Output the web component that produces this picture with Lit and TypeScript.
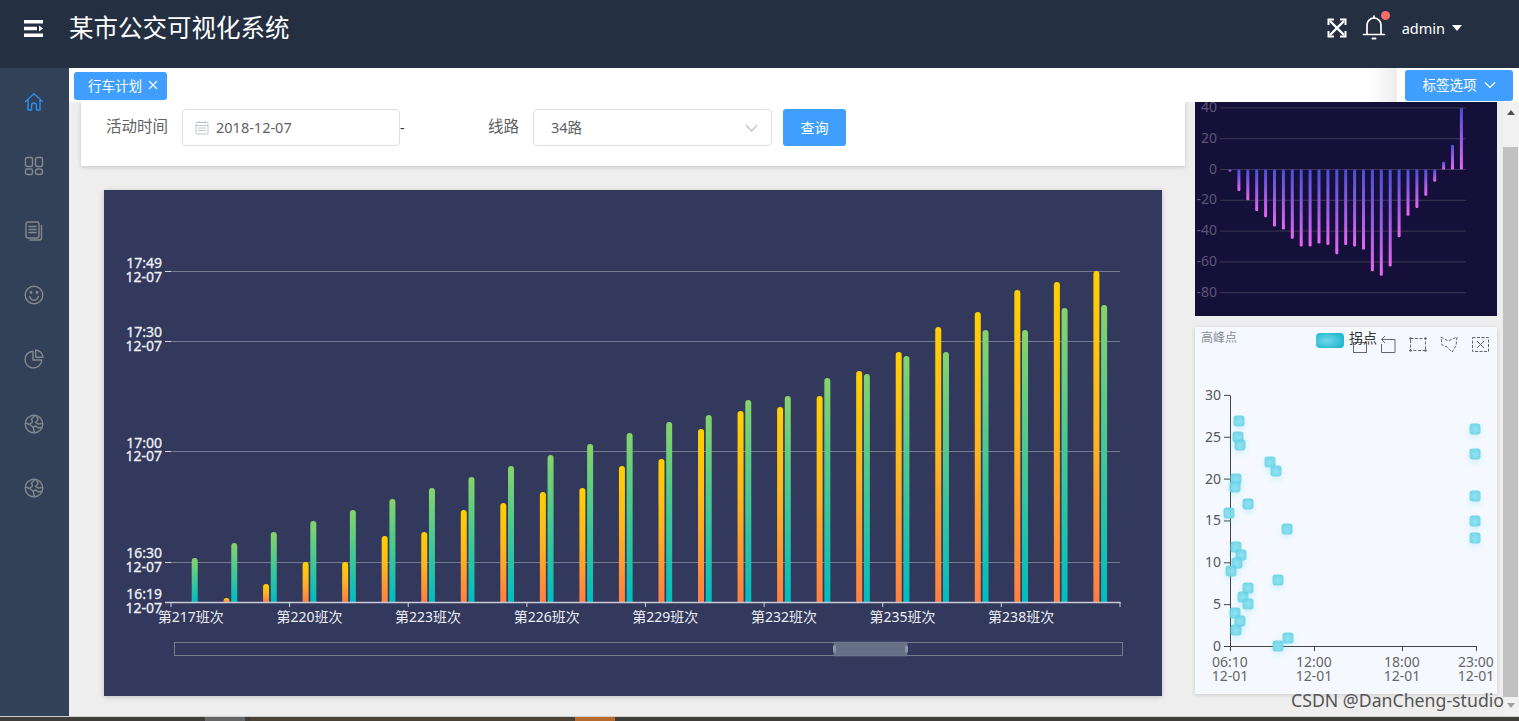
import { LitElement, html, css, svg } from "lit";
import { customElement } from "lit/decorators.js";

const FONT = `"Noto Sans","Noto Sans CJK SC",sans-serif`;

const ORANGE = [0, 598, 584, 562, 562, 536, 532, 510, 503, 492, 488, 466, 459, 429, 411, 407, 396, 371, 352, 327, 312, 290, 282, 271];
const GREEN = [558, 543, 532, 521, 510, 499, 488, 477, 466, 455, 444, 433, 422, 415, 400, 396, 378, 374, 356, 352, 330, 330, 308, 305];
const Y_LABELS: [number, string, number, number][] = [[271, "17:49", -3, 11], [341, "17:30", -4, 10], [451, "17:00", -3, 10], [562, "16:30", -4, 10], [602, "16:19", -3, 11]];
const STEP = 39.54;
const X0 = 171;
const BASE = 602;

const DIFF = [-1, -14, -20, -27, -31, -37, -39, -45, -50, -50, -48, -49, -55, -49, -50, -52, -66, -69, -63, -44, -30, -25, -17, -8, 5, 16, 40];
const POINTS: [number, number][] = [[1239, 421], [1238, 437], [1240, 445], [1270, 462], [1276, 471], [1236, 479], [1235, 487], [1248, 504], [1229, 513], [1287, 529], [1236, 547], [1241, 555], [1237, 563], [1231, 571], [1278, 580], [1248, 588], [1243, 597], [1248, 604], [1235, 613], [1240, 621], [1236, 630], [1288, 638], [1278, 646], [1475, 429], [1475, 454], [1475, 496], [1475, 521], [1475, 538]];

const roundTop = (x: number, top: number, w: number, base: number, r: number) =>
  `M${x - w / 2} ${base}V${top + r}a${r} ${r} 0 0 1 ${w} 0V${base}Z`;

const navIcons = [
  svg`<path d="M1.5 9.5 10 1.8l8.5 7.7M4 8v10h3.6v-4.6a2.4 2.4 0 0 1 4.8 0V18H16V8" stroke="#2f8fee"/>`,
  svg`<rect x="1.5" y="1.5" width="7" height="9" rx="1.5"/><rect x="11.5" y="1.5" width="7" height="9" rx="1.5"/><rect x="1.5" y="13" width="7" height="5.5" rx="1.5"/><rect x="11.5" y="13" width="7" height="5.5" rx="2.5"/>`,
  svg`<rect x="2" y="1" width="13" height="16" rx="2"/><path d="M5 5.5h7M5 8.5h7M5 11.5h7M17.5 4.5V17a2 2 0 0 1-2 2H6"/>`,
  svg`<circle cx="10" cy="10" r="8.8"/><path d="M5.6 11.5c1 2.6 2.6 3.8 4.4 3.8s3.4-1.2 4.4-3.8"/><circle cx="7" cy="7.3" r=".8" fill="#85888d"/><circle cx="13" cy="7.3" r=".8" fill="#85888d"/>`,
  svg`<path d="M9 2.2A8.4 8.4 0 1 0 17.8 11H9ZM11.7 1v7.2H19A7.8 7.8 0 0 0 11.7 1Z"/>`,
  svg`<circle cx="10" cy="10" r="8.8"/><path d="M11 1.5 7.5 5 8.5 8 5.5 10.5 2 9M5.5 10.5 9 13l1.5 5.5M13 3l1 3-2.5 2.5L14 10l4-.5M9 13l3-1 2 2 2.5-.5"/>`,
  svg`<circle cx="10" cy="10" r="8.8"/><path d="M11 1.5 7.5 5 8.5 8 5.5 10.5 2 9M5.5 10.5 9 13l1.5 5.5M13 3l1 3-2.5 2.5L14 10l4-.5M9 13l3-1 2 2 2.5-.5"/>`,
];

@customElement("app-root")
export class AppRoot extends LitElement {
  static styles = css`
    :host { display: block; height: 721px; overflow: hidden; font-family: ${css([FONT] as unknown as TemplateStringsArray)}; background: #eeeeee; position: relative; }
    .page { display: flex; flex-direction: column; height: 721px; }
    .head { height: 68px; flex: none; background: #242f42; display: flex; align-items: center; padding: 0 57px 12px 24px; box-sizing: border-box; color: #fff; }
    .burger { width: 19px; height: 17px; display: block; flex: none; margin-right: 26px; }
    .title { font-size: 24.5px; line-height: 34px; flex: 1; white-space: nowrap; }
    .tools { display: flex; align-items: center; }
    .expand { width: 20px; height: 20px; display: block; margin-right: 15px; }
    .bell { position: relative; width: 24px; height: 26px; margin-right: 16px; }
    .bell svg { width: 24px; height: 26px; display: block; }
    .dot { position: absolute; left: 19px; top: -4px; width: 9px; height: 9px; border-radius: 50%; background: #f56c6c; }
    .user { font-size: 14.5px; line-height: 20px; margin-right: 7px; }
    .caret { width: 0; height: 0; border: 5.5px solid transparent; border-top: 6px solid #fff; border-bottom: 0; }
    .body { flex: 1; min-height: 0; display: flex; }
    .side { width: 69px; flex: none; background: #324157; padding-top: 2px; box-sizing: border-box; }
    .nav { height: 64.3px; display: flex; align-items: center; justify-content: center; padding-right: 1px; }
    .nav svg { width: 20px; height: 20px; fill: none; stroke: #85888d; stroke-width: 1.4; stroke-linejoin: round; stroke-linecap: round; }
    .main { flex: 1; min-width: 0; display: flex; flex-direction: column; }
    .tabs { height: 34px; flex: none; background: #fff; display: flex; align-items: flex-start; padding-left: 5px; position: relative; z-index: 2; }
    .tab { margin-top: 4px; height: 28px; width: 93px; box-sizing: border-box; padding: 0 0 3px 14px; display: flex; align-items: center; gap: 6px; background: #409eff; color: #fff; font-size: 13.5px; border-radius: 3px; }
    .tab svg { width: 10px; height: 10px; display: block; margin-top: 1px; }
    .fade { margin-left: auto; width: 27px; height: 34px; background: linear-gradient(90deg, #ffffff, #ececec); }
    .opts { margin: 2px 6px 0 8px; width: 108px; height: 31px; box-sizing: border-box; padding-bottom: 3px; display: flex; align-items: center; justify-content: center; gap: 7px; background: #409eff; color: #fff; font-size: 13.5px; border-radius: 3px; }
    .opts svg { width: 12px; height: 8px; display: block; margin-top: 1px; }
    .content { flex: 1; min-height: 0; display: flex; overflow: hidden; padding-left: 12px; }
    .left { width: 1104px; flex: none; }
    .form { height: 64px; background: #fff; box-shadow: 0 1px 4px rgba(0,0,0,.18); box-sizing: border-box; padding: 7px 0 0 25px; display: flex; align-items: flex-start; color: #606266; }
    .lab { font-size: 15.5px; line-height: 35px; white-space: nowrap; }
    .input { height: 37px; box-sizing: border-box; border: 1px solid #dcdfe6; border-radius: 4px; background: #fff; display: flex; align-items: center; font-size: 14.5px; color: #606266; }
    .date { width: 218px; margin-left: 14px; padding: 0 0 2px 12px; gap: 7px; }
    .date svg { width: 14px; height: 15px; display: block; margin-top: 2px; }
    .dash { width: 88px; line-height: 37px; font-size: 14px; color: #333; }
    .select { width: 239px; margin-left: 14px; padding: 0 13px 2px 17px; justify-content: space-between; }
    .select svg { width: 13px; height: 8px; display: block; margin-top: 2px; }
    .btn { width: 63px; height: 37px; margin-left: 11px; padding-bottom: 2px; box-sizing: border-box; background: #409eff; color: #fff; font-size: 14px; border-radius: 3px; display: flex; align-items: center; justify-content: center; }
    .big { margin: 24px 23px 0; height: 506px; background: #32395c; box-shadow: 0 1px 5px rgba(0,0,0,.2); }
    .big svg, .diff svg, .scatter svg { display: block; width: 100%; height: 100%; }
    .right { width: 302px; flex: none; margin-left: 10px; }
    .diff { height: 214px; background: #15103a; }
    .scatter { height: 367px; margin-top: 11px; background: #f5f9ff; box-shadow: 0 1px 4px rgba(0,0,0,.15); }
    text { font-family: ${css([FONT] as unknown as TemplateStringsArray)}; }
    .bar { width: 16px; flex: none; margin-left: 6px; background: #f1f1f1; display: flex; flex-direction: column; align-items: stretch; }
    .arr { height: 20px; flex: none; display: flex; align-items: center; justify-content: center; box-sizing: border-box; }
    .up { width: 0; height: 0; border: 4px solid transparent; border-bottom: 5px solid #505050; border-top: 0; }
    .dn { width: 0; height: 0; border: 4px solid transparent; border-top: 5px solid #a0a0a0; border-bottom: 0; }
    .thumb { height: 550px; margin-top: 25px; background: #c1c1c1; flex: none; margin-right: 1px; }
    .arr.end { margin-top: auto; padding-bottom: 4px; }
    .strip { height: 5px; flex: none; border-top: 1px solid #cfcfcf; box-sizing: border-box; background: #3f3e3a; display: flex; }
    .s1 { width: 205px; } .s2 { width: 40px; background: #666; } .s3 { width: 5px; } .s4 { width: 325px; background: #4a4236; } .s5 { width: 40px; background: #b86a2c; }
    .mark { position: absolute; left: 1291px; top: 688px; font-size: 17.7px; line-height: 24px; color: #555; white-space: nowrap; }
  `;

  private bigChart() {
    const ticks: number[] = [];
    for (let i = 0; i <= 21; i += 3) ticks.push(X0 + i * STEP);
    ticks.push(1120);
    return html`<svg viewBox="104 190 1058 506">
      <defs>
        <linearGradient id="og" x1="0" y1="0" x2="0" y2="1"><stop offset="0" stop-color="#ffd000"/><stop offset=".45" stop-color="#ffb81c"/><stop offset="1" stop-color="#ff7f45"/></linearGradient>
        <linearGradient id="gg" x1="0" y1="0" x2="0" y2="1"><stop offset="0" stop-color="#86d36a"/><stop offset="1" stop-color="#00bcc0"/></linearGradient>
      </defs>
      ${Y_LABELS.slice(0, 4).map(([y]) => svg`<line x1="171" x2="1120" y1=${y + 0.5} y2=${y + 0.5} stroke="#747a90"/><line x1="165" x2="171" y1=${y + 0.5} y2=${y + 0.5} stroke="#d2d4e0"/>`)}
      ${ORANGE.map((top, i) => (top ? svg`<path d=${roundTop(X0 + 16 + i * STEP, top, 6, BASE, 3)} fill="url(#og)"/>` : null))}
      ${GREEN.map((top, i) => svg`<path d=${roundTop(X0 + 23.7 + i * STEP, top, 6, BASE, 3)} fill="url(#gg)"/>`)}
      <line x1="165" x2="1120.5" y1="602.5" y2="602.5" stroke="#c8cad8" stroke-width="1.6"/>
      ${ticks.map((x) => svg`<line x1=${x} x2=${x} y1="602" y2="607" stroke="#d2d4e0"/>`)}
      ${Y_LABELS.map(([y, t, a, b]) => svg`<text x="162" y=${y + a} text-anchor="end" font-size="14" fill="#f0f1f6" stroke="#f0f1f6" stroke-width=".3">${t}</text><text x="162" y=${y + b} text-anchor="end" font-size="14" fill="#f0f1f6" stroke="#f0f1f6" stroke-width=".3">12-07</text>`)}
      ${[217, 220, 223, 226, 229, 232, 235, 238].map((n, k) => svg`<text x=${X0 + k * 3 * STEP + 19.8} y="622" text-anchor="middle" font-size="14" fill="#eceef4">第${n}班次</text>`)}
      <rect x="174.5" y="642.5" width="948" height="13" fill="none" stroke="#737b8c"/>
      <rect x="834" y="642" width="73" height="14" fill="#667089" stroke="#7d8699" stroke-width=".5"/>
      <rect x="833" y="645.5" width="3" height="7" rx="1" fill="#8b93a7"/>
      <rect x="905" y="645.5" width="3" height="7" rx="1" fill="#8b93a7"/>
    </svg>`;
  }

  private diffChart() {
    const y = (v: number) => 169.5 - (v * 30.8) / 20;
    return html`<svg viewBox="1195 102 302 214">
      <defs><linearGradient id="pg" x1="0" y1="0" x2="0" y2="1"><stop offset="0" stop-color="#4a4fd6"/><stop offset="1" stop-color="#e866f2"/></linearGradient></defs>
      ${[40, 20, 0, -20, -40, -60, -80].map((v) => svg`
        <line x1="1220" x2="1466" y1=${y(v)} y2=${y(v)} stroke="#3b3752"/>
        <text x="1217" y=${y(v) + 4} text-anchor="end" font-size="14" fill="#5b5774">${v}</text>`)}
      ${DIFF.map((v, i) => {
        const x = 1230 + i * 8.9;
        const top = Math.min(y(v), y(0));
        const h = Math.max(Math.abs(y(v) - y(0)), 2);
        return svg`<rect x=${x - 1.5} y=${top} width="3" height=${h} rx="1.2" fill="url(#pg)"/>`;
      })}
    </svg>`;
  }

  private scatterChart() {
    const yt = [0, 5, 10, 15, 20, 25, 30];
    const y = (v: number) => 646 - v * 8.37;
    const xt: [number, string][] = [[1230, "06:10"], [1314, "12:00"], [1402, "18:00"], [1476, "23:00"]];
    return html`<svg viewBox="1195 327 302 367">
      <defs>
        <radialGradient id="sg" cx=".5" cy=".55" r=".7"><stop offset="0" stop-color="#8ae0f0"/><stop offset="1" stop-color="#5ccfe4"/></radialGradient>
        <radialGradient id="lg" cx=".4" cy=".5" r=".7"><stop offset="0" stop-color="#72d8ea"/><stop offset="1" stop-color="#18b4cc"/></radialGradient>
        <filter id="ss" x="-60%" y="-60%" width="220%" height="240%"><feDropShadow dx="0" dy="3" stdDeviation="3" flood-color="#3cc0dc" flood-opacity=".22"/></filter>
      </defs>
      <text x="1201" y="342" font-size="12" fill="#8a8d93">高峰点</text>
      <rect x="1316" y="333" width="28" height="15" rx="4" fill="url(#lg)"/>
      <g fill="none" stroke="#666" stroke-width="1">
        <rect x="1353.5" y="342.5" width="13" height="10"/>
        <path d="M1385 336l-3.5 3.5 3.5 3.5M1381.5 339.500h13.500v13h-13.500V344"/>
        <g stroke-dasharray="3 1.500">
          <rect x="1410.500" y="338.500" width="15" height="12"/>
          <path d="M1441 337l7 4 9-4-1 9-4 6-5-5-5-2Z"/>
          <rect x="1472.500" y="337.500" width="16" height="14"/>
        </g>
        <path d="M1477 341l7 7M1484 341l-7 7"/>
      </g>
      <g fill="#666">
        <circle cx="1410.500" cy="338.500" r="1.200"/><circle cx="1425.500" cy="338.500" r="1.200"/><circle cx="1410.500" cy="350.500" r="1.200"/><circle cx="1425.500" cy="350.500" r="1.200"/>
      </g>
      <text x="1349" y="343" font-size="14" fill="#333">拐点</text>
      <path d="M1230.5 395.5V646.5H1476.5" fill="none" stroke="#444" stroke-width="1"/>
      ${yt.map((v) => svg`
        <line x1="1224" x2="1230" y1=${y(v) + 0.5} y2=${y(v) + 0.5} stroke="#444"/>
        <text x="1221" y=${y(v) + 5} text-anchor="end" font-size="14" fill="#555">${v}</text>`)}
      ${xt.map(([x, t]) => svg`
        <line x1=${x + 0.5} x2=${x + 0.5} y1="646" y2="651" stroke="#444"/>
        <text x=${x} y="667" text-anchor="middle" font-size="14" fill="#666">${t}</text>
        <text x=${x} y="681" text-anchor="middle" font-size="14" fill="#666">12-01</text>`)}
      ${POINTS.map(([px, py]) => svg`<rect x=${px - 5.5} y=${py - 5.5} width="11" height="11" rx="3" fill="url(#sg)" fill-opacity=".9" filter="url(#ss)"/>`)}
    </svg>`;
  }

  render() {
    return html`<div class="page">
      <header class="head">
        <svg class="burger" viewBox="0 0 19 17"><path d="M0 0h19v3.500H0zM0 6.750h13v3.500H0zM0 13.500h19V17H0z" fill="#fff"/><path d="M15 5.500l4 3-4 3z" fill="#fff"/></svg>
        <div class="title">某市公交可视化系统</div>
        <div class="tools">
          <svg class="expand" viewBox="0 0 20 20" fill="none" stroke="#fff" stroke-width="2.4"><path d="M3 3l14 14M17 3 3 17"/><path d="M1.5 7V1.5H7M13 1.5h5.5V7M18.5 13v5.5H13M7 18.5H1.5V13" stroke-width="2"/></svg>
          <div class="bell">
            <svg viewBox="0 0 24 26" fill="none" stroke="#fff" stroke-width="1.7" stroke-linecap="round"><path d="M5 19V10a7 7 0 0 1 14 0v9M1.500 19.500h21"/><path d="M12 1v2" /><path d="M10.500 23.500h3" stroke-width="2"/></svg>
            <span class="dot"></span>
          </div>
          <span class="user">admin</span>
          <span class="caret"></span>
        </div>
      </header>
      <div class="body">
        <nav class="side">
          ${navIcons.map((i) => html`<div class="nav"><svg viewBox="0 0 20 20">${i}</svg></div>`)}
        </nav>
        <div class="main">
          <div class="tabs">
            <div class="tab">行车计划<svg viewBox="0 0 10 10" fill="none" stroke="#fff" stroke-width="1.1"><path d="M1 1l8 8M9 1l-8 8"/></svg></div>
            <div class="fade"></div>
            <div class="opts">标签选项<svg viewBox="0 0 12 8" fill="none" stroke="#fff" stroke-width="1.2"><path d="M1 1.500l5 5 5-5"/></svg></div>
          </div>
          <div class="content">
            <div class="left">
              <section class="form">
                <span class="lab">活动时间</span>
                <div class="input date"><svg viewBox="0 0 14 15" fill="none" stroke="#c0c4cc"><rect x="1" y="2.500" width="12" height="11.500" rx="1"/><path d="M1 5.500h12M4 1v2M10 1v2M3 8h8M3 10.500h8" /></svg>2018-12-07</div>
                <span class="dash">-</span>
                <span class="lab">线路</span>
                <div class="input select">34路<svg viewBox="0 0 13 8" fill="none" stroke="#c0c4cc" stroke-width="1.2"><path d="M1 1l5.500 6L12 1"/></svg></div>
                <div class="btn">查询</div>
              </section>
              <section class="big">${this.bigChart()}</section>
            </div>
            <div class="right">
              <section class="diff">${this.diffChart()}</section>
              <section class="scatter">${this.scatterChart()}</section>
            </div>
            <div class="bar">
              <div class="arr"><span class="up"></span></div>
              <div class="thumb"></div>
              <div class="arr end"><span class="dn"></span></div>
            </div>
          </div>
        </div>
      </div>
      <div class="strip"><span class="s1"></span><span class="s2"></span><span class="s3"></span><span class="s4"></span><span class="s5"></span></div>
    </div>
    <div class="mark">CSDN @DanCheng-studio</div>`;
  }
}
